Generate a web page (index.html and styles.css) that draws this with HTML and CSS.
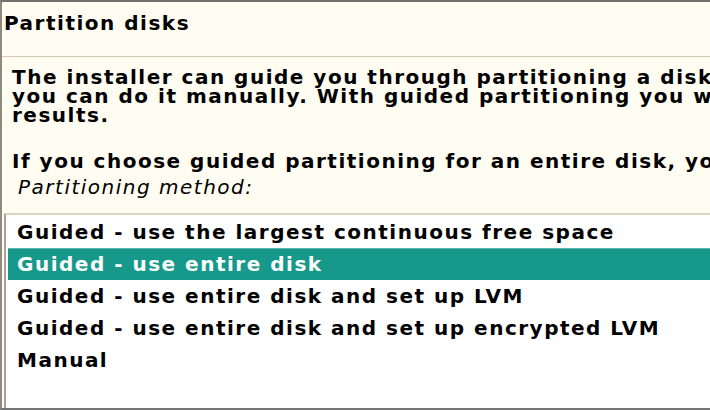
FILE: index.html
```html
<!DOCTYPE html>
<html>
<head>
<meta charset="utf-8">
<link rel="stylesheet" href="styles.css">
</head>
<body>
<div class="frame">
  <div class="title">Partition disks</div>
  <div class="content">
    <p class="para">The installer can guide you through partitioning a disk (using different standard schemes) or, if you prefer,<br>you can do it manually. With guided partitioning you will still have a chance later to review and customise the<br>results.</p>
    <p class="para second">If you choose guided partitioning for an entire disk, you will next be asked which disk should be used.</p>
    <div class="label">Partitioning method:</div>
  </div>
  <div class="list">
    <div class="row">Guided - use the largest continuous free space</div>
    <div class="row selected">Guided - use entire disk</div>
    <div class="row">Guided - use entire disk and set up LVM</div>
    <div class="row">Guided - use entire disk and set up encrypted LVM</div>
    <div class="row">Manual</div>
  </div>
</div>
</body>
</html>
```
FILE: styles.css
```css
html, body {
  margin: 0;
  padding: 0;
  overflow: hidden;
  background: #fffdf2;
}
.frame {
  width: 1100px;
  height: 410px;
  box-sizing: border-box;
  border-top: 2px solid #707070;
  border-left: 2px solid #8e8a80;
  border-bottom: 2px solid #747474;
  display: flex;
  flex-direction: column;
  font-family: "DejaVu Sans", sans-serif;
  font-size: 20px;
  line-height: 19px;
  letter-spacing: 1.5px;
  color: #000;
}
.title {
  height: 55px;
  box-sizing: border-box;
  padding: 12px 0 0 2px;
  font-weight: bold;
  border-bottom: 1px solid #d6cab4;
}
.content {
  padding: 11px 0 0 10px;
  white-space: nowrap;
}
.para {
  margin: 0;
  font-weight: bold;
}
.para.second {
  margin-top: 27px;
}
.label {
  font-style: italic;
  margin: 7px 0 0 6px;
}
.list {
  flex: 1;
  margin: 16px 0 0 2px;
  padding: 1px 0 0 2px;
  background: #ffffff;
  border-top: 2px solid #ddd3c1;
  border-left: 2px solid #aaa395;
  white-space: nowrap;
}
.row {
  height: 32px;
  line-height: 32px;
  padding-left: 9px;
  font-weight: bold;
}
.row.selected {
  background: #16998a;
  color: #ffffff;
  box-shadow: inset 0 1px 0 #5db5aa;
}
```
